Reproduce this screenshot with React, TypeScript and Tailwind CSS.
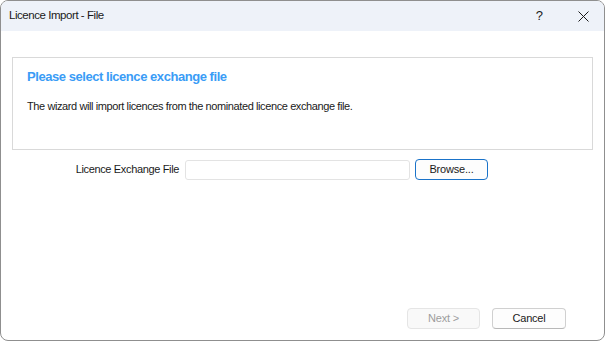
import React from "react";

const font = { fontFamily: '"Liberation Sans", Arial, sans-serif' };

export default function App() {
    return (
        <div className="w-[606px] h-[341px] bg-white" style={font}>
            <div className="w-[605px] h-[341px] border border-[#8f8f8f] rounded-lg overflow-hidden flex flex-col bg-white">
                <div className="h-[30px] bg-[#eef2f9] flex items-center justify-between pl-[8px] pr-[15px]">
                    <span className="text-[11.5px] tracking-[-0.45px] text-[#1a1a1a]">Licence Import - File</span>
                    <div className="flex items-center gap-[35px]">
                        <span className="text-[13px] text-[#1a1a1a]">?</span>
                        <svg width="11" height="11" viewBox="0 0 11 11">
                            <path d="M0.5 0.5 L10.5 10.5 M10.5 0.5 L0.5 10.5" stroke="#1a1a1a" strokeWidth="1" />
                        </svg>
                    </div>
                </div>
                <div className="flex-1 flex flex-col px-[11px] pt-[26px] pb-[11px]">
                    <div className="h-[93px] border border-[#d9d9d9] px-[14px] pt-[10px]">
                        <div className="text-[13px] font-bold tracking-[-0.45px] text-[#3a9cf6] leading-[18px]">
                            Please select licence exchange file
                        </div>
                        <div className="text-[11px] tracking-[-0.4px] text-[#1a1a1a] mt-[13px] leading-[14px]">
                            The wizard will import licences from the nominated licence exchange file.
                        </div>
                    </div>
                    <div className="flex items-center mt-[9px] h-[21px]">
                        <span className="w-[167px] text-right text-[11px] tracking-[-0.35px] text-[#1a1a1a]">Licence Exchange File</span>
                        <div className="ml-[6px] w-[225px] h-[20px] border border-[#e3e3e3] rounded-[3px] bg-white" />
                        <button className="ml-[5px] w-[73px] h-[21px] border border-[#1a73c9] rounded-[4px] bg-[#fdfdfd] text-[11px] tracking-[-0.2px] text-[#1a1a1a] leading-none">
                            Browse...
                        </button>
                    </div>
                    <div className="flex-1" />
                    <div className="flex justify-end gap-[12px] pr-[27px]">
                        <button className="w-[73px] h-[21px] border border-[#e5e5e5] rounded-[4px] bg-[#f9f9f9] text-[11px] tracking-[-0.2px] text-[#9d9d9d] leading-none">
                            Next &gt;
                        </button>
                        <button className="w-[74px] h-[21px] border border-[#d0d0d0] border-b-[#b8b8b8] rounded-[4px] bg-[#fdfdfd] text-[11px] tracking-[-0.2px] text-[#1a1a1a] leading-none">
                            Cancel
                        </button>
                    </div>
                </div>
            </div>
        </div>
    );
}
